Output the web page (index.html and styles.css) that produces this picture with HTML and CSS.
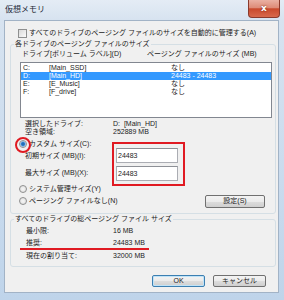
FILE: index.html
```html
<!DOCTYPE html>
<html lang="ja">
<head>
    <meta charset="UTF-8">
    <meta name="viewport" content="width=device-width, initial-scale=1.0">
    <title>仮想メモリ</title>
    <link rel="stylesheet" href="styles.css">
</head>
<body>
    <div class="window">
        <div class="titlebar">
            <span class="title">仮想メモリ</span>
            <span class="close">x</span>
        </div>
        <div class="client">
            <div class="check-row"><span class="checkbox"></span>すべてのドライブのページング ファイルのサイズを自動的に管理する(A)</div>

            <div class="group group-drives">
                <div class="group-title"><span>各ドライブのページング ファイルのサイズ</span></div>
                <div class="list-head">
                    <span class="head-drive">ドライブ</span>
                    <span class="head-label">[ボリューム ラベル](D)</span>
                    <span>ページング ファイルのサイズ (MB)</span>
                </div>
                <div class="drive-list">
                    <div class="drive-row"><span class="col-drive">C:</span><span class="col-label">[Main_SSD]</span><span>なし</span></div>
                    <div class="drive-row selected"><span class="col-drive">D:</span><span class="col-label">[Main_HD]</span><span>24483 - 24483</span></div>
                    <div class="drive-row"><span class="col-drive">E:</span><span class="col-label">[E_Music]</span><span>なし</span></div>
                    <div class="drive-row"><span class="col-drive">F:</span><span class="col-label">[F_drive]</span><span>なし</span></div>
                </div>
                <div class="info-row first"><span>選択したドライブ:</span><span>D:&nbsp;&nbsp;[Main_HD]</span></div>
                <div class="info-row"><span>空き領域:</span><span>252889 MB</span></div>

                <div class="custom">
                    <div class="custom-labels">
                        <div class="radio-row"><span class="radio checked"></span>カスタム サイズ(C):</div>
                        <div class="size-label">初期サイズ (MB)(I):</div>
                        <div class="size-label second">最大サイズ (MB)(X):</div>
                    </div>
                    <div class="highlight-box">
                        <div class="field">24483</div>
                        <div class="field second">24483</div>
                    </div>
                </div>
                <div class="radio-row system"><span class="radio"></span>システム管理サイズ(Y)</div>
                <div class="radio-row"><span class="radio"></span>ページング ファイルなし(N)<button class="btn set-btn">設定(S)</button></div>
            </div>

            <div class="group group-total">
                <div class="group-title"><span>すべてのドライブの総ページング ファイル サイズ</span></div>
                <div class="total-row first"><span>最小限:</span><span>16 MB</span></div>
                <div class="total-row marked"><span>推奨:</span><span>24483 MB</span></div>
                <div class="total-row"><span>現在の割り当て:</span><span>32000 MB</span></div>
            </div>

            <div class="dialog-buttons">
                <button class="btn default">OK</button>
                <button class="btn">キャンセル</button>
            </div>
        </div>
    </div>
</body>
</html>
```

FILE: styles.css
```css
body {
    margin: 0;
    font-family: "Liberation Sans", "Noto Sans CJK JP", sans-serif;
    font-size: 7px;
    color: #1c1c1c;
}
.window {
    width: 284px;
    height: 300px;
    display: flex;
    flex-direction: column;
    background: linear-gradient(to bottom, #e4ecf5 0, #d7e3f0 20px, #c9dbee 60%, #bfd4ea 100%);
}
.titlebar {
    height: 20px;
    flex: none;
    display: flex;
    justify-content: space-between;
    align-items: flex-start;
    padding: 0 4px 0 5px;
}
.title {
    font-size: 8px;
    line-height: 20px;
    color: #1e2836;
}
.close {
    width: 32px;
    height: 18px;
    box-sizing: border-box;
    border: 1px solid #8a3a2c;
    border-top: none;
    border-radius: 0 0 4px 4px;
    background: linear-gradient(to bottom, #eab1a3 0%, #de8c78 45%, #c9492c 52%, #d8694c 100%);
    color: #fff;
    font-family: "DejaVu Sans", sans-serif;
    font-weight: bold;
    font-size: 9px;
    line-height: 16px;
    text-align: center;
    text-shadow: 0 0 2px #6b1a10;
}
.client {
    height: 273px;
    flex: none;
    margin: 0 5px 0 4px;
    box-sizing: border-box;
    border: 1px solid #a2b3c6;
    background: #f0f0f0;
    display: flex;
    flex-direction: column;
}

/* checkbox line */
.check-row {
    margin-top: 7px;
    height: 10px;
    line-height: 10px;
    padding-left: 13px;
    display: flex;
    align-items: center;
    white-space: nowrap;
}
.checkbox {
    width: 9px;
    height: 9px;
    box-sizing: border-box;
    border: 1px solid #8e8f8f;
    background: linear-gradient(135deg, #d8d8d8, #fbfbfb);
    margin-right: 2px;
}

/* group boxes */
.group {
    border: 1px solid #d5dfe5;
    border-radius: 3px;
    margin: 6px 2px 0 5px;
}
.group-title {
    margin-top: -6px;
    height: 10px;
    line-height: 10px;
    padding-left: 3px;
    white-space: nowrap;
}
.group-title span {
    background: #f0f0f0;
    padding: 0 1px;
}
.group-drives {
    padding-bottom: 6px;
}
.group-total {
    margin-top: 5px;
    padding-bottom: 4px;
}

/* drive list */
.list-head {
    height: 10px;
    line-height: 10px;
    padding-left: 11px;
    display: flex;
    white-space: nowrap;
}
.head-drive {
    width: 28px;
}
.head-label {
    width: 97px;
}
.drive-list {
    height: 56px;
    box-sizing: border-box;
    margin: 3px 3px 0 9px;
    padding-top: 1px;
    border: 1px solid #828790;
    background: #fff;
}
.drive-row {
    height: 8px;
    line-height: 7px;
    padding-left: 2px;
    display: flex;
    white-space: nowrap;
}
.drive-row.selected {
    background: #3399ff;
    color: #fff;
}
.col-drive {
    width: 26px;
}
.col-label {
    width: 122px;
}

.info-row {
    display: grid;
    grid-template-columns: 88px auto;
    padding-left: 14px;
    height: 8px;
    line-height: 8px;
    white-space: nowrap;
}
.info-row.first {
    margin-top: 2px;
}

/* custom size block */
.custom {
    display: flex;
    align-items: flex-start;
    margin-top: 2px;
}
.custom-labels {
    width: 101px;
}
.radio-row {
    height: 12px;
    line-height: 12px;
    padding-left: 8px;
    display: flex;
    align-items: center;
    white-space: nowrap;
}
.radio-row.system {
    margin-top: 1px;
}
.radio {
    position: relative;
    width: 8px;
    height: 8px;
    box-sizing: border-box;
    border: 1px solid #8e8f8f;
    border-radius: 50%;
    background: radial-gradient(circle, #f6f6f6 0, #dcdcdc 100%);
    margin-right: 2px;
}
.radio.checked {
    background: radial-gradient(circle, #1f5e9c 0, #2f80cc 1.6px, #9cc7ee 2.6px, #eeeeee 3.2px);
}
.radio.checked::after {
    content: "";
    position: absolute;
    left: -5px;
    top: -4px;
    width: 16px;
    height: 16px;
    box-sizing: border-box;
    border: 2px solid #e01a22;
    border-radius: 50%;
}
.size-label {
    height: 11px;
    line-height: 11px;
    padding-left: 14px;
    white-space: nowrap;
}
.size-label.second {
    margin-top: 6px;
}
.highlight-box {
    width: 73px;
    box-sizing: border-box;
    margin-top: 4px;
    margin-bottom: -4px;
    padding: 4px 0 3px 2px;
    border: 2px solid #e01a22;
}
.field {
    width: 62px;
    height: 15px;
    box-sizing: border-box;
    border: 1px solid #abadb3;
    border-top-color: #8d9096;
    background: #fff;
    line-height: 13px;
    padding-left: 1px;
}
.field.second {
    margin-top: 3px;
}

/* buttons */
.btn {
    font-family: inherit;
    font-size: 7px;
    color: #1c1c1c;
    padding: 0;
    height: 12px;
    line-height: 10px;
    border: 1px solid #707070;
    border-radius: 2px;
    background: linear-gradient(to bottom, #f3f3f3 0%, #ebebeb 50%, #dddddd 51%, #cfcfcf 100%);
}
.set-btn {
    margin-left: auto;
    margin-right: 10px;
    width: 60px;
    height: 13px;
}
.btn.default {
    border-color: #3c7fb1;
    box-shadow: inset 0 0 0 1px #bfe3f8;
}
.dialog-buttons {
    display: flex;
    justify-content: flex-end;
    gap: 8px;
    margin-top: 8px;
    padding-right: 12px;
}
.dialog-buttons .btn {
    width: 53px;
}

/* totals */
.total-row {
    display: grid;
    grid-template-columns: 87px auto;
    margin-left: 9px;
    padding-left: 6px;
    height: 12px;
    line-height: 12px;
    white-space: nowrap;
}
.total-row.first {
    margin-top: 1px;
}
.total-row.marked {
    width: 123px;
    height: 11px;
    line-height: 11px;
    border-bottom: 2px solid #e01a22;
}
```
